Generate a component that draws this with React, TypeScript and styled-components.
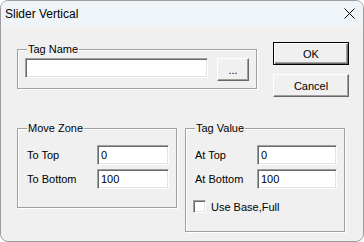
import React from 'react';
import styled, { createGlobalStyle } from 'styled-components';

const GlobalStyle = createGlobalStyle`
  html, body {
    margin: 0;
    padding: 0;
    background: #ffffff;
  }
  * {
    box-sizing: border-box;
  }
`;

const WindowStyle = styled.div`
  width: 364px;
  height: 242px;
  border: 1px solid #9d9d9d;
  border-radius: 8px;
  overflow: hidden;
  background: #f0f0f0;
  font-family: 'Liberation Sans', Arial, sans-serif;
  font-size: 11px;
  color: #000;
  display: flex;
  flex-direction: column;
`;

const TitleBarStyle = styled.div`
  height: 25px;
  flex: none;
  display: flex;
  align-items: center;
  justify-content: space-between;
  padding: 0 8px 0 4px;
  background: #eff4f9;
  span {
    font-size: 12px;
    color: #000;
  }
`;

const ClientStyle = styled.div`
  flex: 1;
  padding: 16px 15px 0 16px;
  display: flex;
  flex-direction: column;
`;

const TopRowStyle = styled.div`
  display: flex;
  align-items: flex-start;
  gap: 16px;
`;

const BottomRowStyle = styled.div`
  display: flex;
  align-items: flex-start;
  gap: 8px;
  margin-top: 24px;
`;

const GroupStyle = styled.div<{ w: number; h: number }>`
  position: relative;
  width: ${(p) => p.w}px;
  height: ${(p) => p.h}px;
  margin-top: 7px;
  border: 1px solid #a0a0a0;
  box-shadow: inset 1px 1px 0 #ffffff, 1px 1px 0 #ffffff;
  padding: 8px 7px 0 7px;
`;

const LegendStyle = styled.span`
  position: absolute;
  top: -7px;
  left: 9px;
  padding: 0 1px;
  line-height: 13px;
  background: #f0f0f0;
`;

const InputStyle = styled.div<{ w: number }>`
  width: ${(p) => p.w}px;
  height: 20px;
  background: #fff;
  border-top: 1px solid #a0a0a0;
  border-left: 1px solid #a0a0a0;
  border-right: 1px solid #fff;
  border-bottom: 1px solid #fff;
  box-shadow: inset 1px 1px 0 #696969, inset -1px -1px 0 #e3e3e3;
  padding: 3px 0 0 3px;
  line-height: 13px;
  white-space: nowrap;
`;

const ButtonStyle = styled.button<{ w: number; isDefault?: boolean }>`
  width: ${(p) => p.w}px;
  height: 23px;
  padding: 0;
  margin: 0;
  font-family: 'Liberation Sans', Arial, sans-serif;
  font-size: 11px;
  color: #000;
  background: #f0f0f0;
  border: 1px solid ${(p) => (p.isDefault ? '#000' : '#f0f0f0')};
  border-top-color: ${(p) => (p.isDefault ? '#000' : '#fff')};
  border-left-color: ${(p) => (p.isDefault ? '#000' : '#fff')};
  border-right-color: ${(p) => (p.isDefault ? '#000' : '#696969')};
  border-bottom-color: ${(p) => (p.isDefault ? '#000' : '#696969')};
  box-shadow: ${(p) =>
    p.isDefault
      ? 'inset 1px 1px 0 #fff, inset -1px -1px 0 #696969, inset -2px -2px 0 #a0a0a0'
      : 'inset -1px -1px 0 #a0a0a0'};
`;

const ButtonColumnStyle = styled.div`
  display: flex;
  flex-direction: column;
  gap: 9px;
`;

const TagNameRowStyle = styled.div`
  display: flex;
  align-items: flex-start;
  gap: 9px;
`;

const FieldListStyle = styled.div`
  display: flex;
  flex-direction: column;
  gap: 4px;
  padding: 8px 0 0 2px;
`;

const FieldRowStyle = styled.div<{ labelW: number }>`
  display: grid;
  grid-template-columns: ${(p) => p.labelW}px auto;
  align-items: center;
`;

const CheckRowStyle = styled.label`
  display: flex;
  align-items: center;
  gap: 5px;
  margin-top: 11px;
`;

const CheckBoxStyle = styled.span`
  width: 13px;
  height: 13px;
  background: #fff;
  border-top: 1px solid #a0a0a0;
  border-left: 1px solid #a0a0a0;
  border-right: 1px solid #fff;
  border-bottom: 1px solid #fff;
  box-shadow: inset 1px 1px 0 #696969, inset -1px -1px 0 #e3e3e3;
`;

function CloseIcon() {
  return (
    <svg width="11" height="11" viewBox="0 0 11 11">
      <path d="M0.5 0.5 L10.5 10.5 M10.5 0.5 L0.5 10.5" stroke="#000" strokeWidth="1" />
    </svg>
  );
}

function Field(props: { label: string; value: string; labelW: number; inputW: number }) {
  return (
    <FieldRowStyle labelW={props.labelW}>
      <span>{props.label}</span>
      <InputStyle w={props.inputW}>{props.value}</InputStyle>
    </FieldRowStyle>
  );
}

export default function App() {
  return (
    <>
      <GlobalStyle />
      <WindowStyle>
        <TitleBarStyle>
          <span>Slider Vertical</span>
          <CloseIcon />
        </TitleBarStyle>
        <ClientStyle>
          <TopRowStyle>
            <GroupStyle w={240} h={40}>
              <LegendStyle>Tag Name</LegendStyle>
              <TagNameRowStyle>
                <InputStyle w={183} />
                <ButtonStyle w={32}>...</ButtonStyle>
              </TagNameRowStyle>
            </GroupStyle>
            <ButtonColumnStyle>
              <ButtonStyle w={76} isDefault>
                OK
              </ButtonStyle>
              <ButtonStyle w={76}>Cancel</ButtonStyle>
            </ButtonColumnStyle>
          </TopRowStyle>
          <BottomRowStyle>
            <GroupStyle w={160} h={80}>
              <LegendStyle>Move Zone</LegendStyle>
              <FieldListStyle>
                <Field label="To Top" value="0" labelW={70} inputW={72} />
                <Field label="To Bottom" value="100" labelW={70} inputW={72} />
              </FieldListStyle>
            </GroupStyle>
            <GroupStyle w={160} h={104}>
              <LegendStyle>Tag Value</LegendStyle>
              <FieldListStyle>
                <Field label="At Top" value="0" labelW={62} inputW={80} />
                <Field label="At Bottom" value="100" labelW={62} inputW={80} />
              </FieldListStyle>
              <CheckRowStyle>
                <CheckBoxStyle />
                <span>Use Base,Full</span>
              </CheckRowStyle>
            </GroupStyle>
          </BottomRowStyle>
        </ClientStyle>
      </WindowStyle>
    </>
  );
}
